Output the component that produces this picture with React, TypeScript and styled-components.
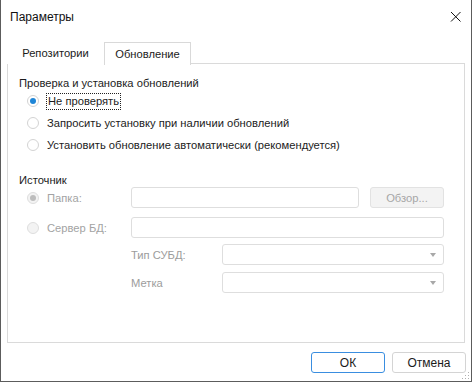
import React from "react";
import styled, { createGlobalStyle } from "styled-components";

const Global = createGlobalStyle`
  html, body { margin: 0; padding: 0; background: #fff; }
  * { box-sizing: border-box; }
  body { font-family: "Liberation Sans", Arial, sans-serif; font-size: 11.2px; color: #1b1b1b; }
`;

const Window = styled.div`
  position: relative;
  width: 472px;
  height: 382px;
  border: 1px solid #5c5c5c;
  border-top: none;
  background: #fff;
  display: flex;
  flex-direction: column;
`;

const TitleBar = styled.div`
  height: 33px;
  display: flex;
  align-items: center;
  justify-content: space-between;
  padding: 0 9px 0 9px;
  font-size: 12px;
  color: #111;
`;

const CloseBtn = styled.div`
  width: 12px;
  height: 12px;
  display: flex;
`;

const Tabs = styled.div`
  display: flex;
  margin: 9px 6px 0 6px;
  height: 22px;
  align-items: stretch;
  position: relative;
  z-index: 1;
`;

const Tab = styled.div<{ $active?: boolean }>`
  display: flex;
  align-items: center;
  justify-content: center;
  width: ${(p) => (p.$active ? "87px" : "97px")};
  border: 1px solid ${(p) => (p.$active ? "#d9d9d9" : "transparent")};
  border-bottom: none;
  background: #fff;
  height: ${(p) => (p.$active ? "23px" : "22px")};
  padding-bottom: 1px;
`;

const Panel = styled.div`
  margin: -1px 6px 0 6px;
  height: 280px;
  border: 1px solid #dadada;
  padding: 12px 11px 0 11px;
`;

const GroupTitle = styled.div`
  height: 14px;
  line-height: 14px;
`;

const RadioRow = styled.label<{ $disabled?: boolean }>`
  display: flex;
  align-items: center;
  height: 22px;
  padding-left: 8px;
  gap: 8px;
  color: ${(p) => (p.$disabled ? "#a3a3a3" : "#1b1b1b")};
`;

const Circle = styled.span<{ $checked?: boolean; $disabled?: boolean }>`
  width: 12px;
  height: 12px;
  border-radius: 50%;
  border: 1px solid ${(p) => (p.$disabled ? "#dedede" : "#d3d3d3")};
  background: ${(p) => (p.$disabled ? "#f3f3f3" : "#fff")};
  display: flex;
  align-items: center;
  justify-content: center;
  flex: none;
  &::after {
    content: "";
    width: 6px;
    height: 6px;
    border-radius: 50%;
    background: ${(p) => (p.$disabled ? "#bdbdbd" : "#1f86d7")};
    display: ${(p) => (p.$checked ? "block" : "none")};
  }
`;

const Focus = styled.span`
  outline: 1px dotted #222;
  padding: 0 1px;
  line-height: 15px;
`;

const Radios = styled.div`
  display: flex;
  flex-direction: column;
  margin-top: 0;
`;

const SourceTitle = styled.div`
  margin-top: 17px;
  height: 14px;
  line-height: 14px;
`;

const FormRow = styled.div<{ $mt: number }>`
  display: flex;
  align-items: center;
  margin-top: ${(p) => p.$mt}px;
  height: 21px;
`;

const LeadCell = styled.div`
  width: 112px;
  flex: none;
  display: flex;
  align-items: center;
  gap: 8px;
  padding-left: 8px;
  color: #a3a3a3;
`;

const SubLabel = styled.div`
  width: 91px;
  flex: none;
  color: #9c9c9c;
  margin-left: 112px;
`;

const Input = styled.div<{ $w: number }>`
  width: ${(p) => p.$w}px;
  height: 21px;
  border: 1px solid #dedede;
  border-radius: 3px;
  background: #fff;
`;

const Combo = styled(Input)`
  display: flex;
  align-items: center;
  justify-content: flex-end;
  padding-right: 7px;
`;

const Arrow = styled.span`
  width: 0;
  height: 0;
  border-left: 3.5px solid transparent;
  border-right: 3.5px solid transparent;
  border-top: 4px solid #a8a8a8;
`;

const BrowseBtn = styled.div`
  margin-left: 11px;
  width: 74px;
  height: 21px;
  border: 1px solid #e2e2e2;
  border-radius: 3px;
  background: #f3f3f3;
  color: #a6a6a6;
  display: flex;
  align-items: center;
  justify-content: center;
`;

const Footer = styled.div`
  display: flex;
  justify-content: flex-end;
  gap: 7px;
  padding: 9px 5px 0 0;
`;

const Button = styled.div<{ $primary?: boolean }>`
  width: 74px;
  height: 21px;
  border: 1px solid ${(p) => (p.$primary ? "#3a8ee0" : "#d4d4d4")};
  border-radius: 3px;
  background: #fff;
  display: flex;
  align-items: center;
  justify-content: center;
  color: #1b1b1b;
  font-size: 12px;
`;

const Grip = styled.svg`
  position: absolute;
  right: 1px;
  bottom: 1px;
`;

export default function App() {
  return (
    <>
      <Global />
      <Window>
        <TitleBar>
          <span>Параметры</span>
          <CloseBtn>
            <svg width="12" height="12" viewBox="0 0 12 12">
              <path d="M1 1 L10.5 10.5 M10.5 1 L1 10.5" stroke="#111" strokeWidth="1" fill="none" />
            </svg>
          </CloseBtn>
        </TitleBar>
        <Tabs>
          <Tab>Репозитории</Tab>
          <Tab $active>Обновление</Tab>
        </Tabs>
        <Panel>
          <GroupTitle>Проверка и установка обновлений</GroupTitle>
          <Radios>
            <RadioRow>
              <Circle $checked />
              <Focus>Не проверять</Focus>
            </RadioRow>
            <RadioRow>
              <Circle />
              Запросить установку при наличии обновлений
            </RadioRow>
            <RadioRow>
              <Circle />
              Установить обновление автоматически (рекомендуется)
            </RadioRow>
          </Radios>
          <SourceTitle>Источник</SourceTitle>
          <FormRow $mt={0}>
            <LeadCell>
              <Circle $checked $disabled />
              Папка:
            </LeadCell>
            <Input $w={228} />
            <BrowseBtn>Обзор...</BrowseBtn>
          </FormRow>
          <FormRow $mt={9}>
            <LeadCell>
              <Circle $disabled />
              Сервер БД:
            </LeadCell>
            <Input $w={313} />
          </FormRow>
          <FormRow $mt={6}>
            <SubLabel>Тип СУБД:</SubLabel>
            <Combo $w={222}>
              <Arrow />
            </Combo>
          </FormRow>
          <FormRow $mt={7}>
            <SubLabel>Метка</SubLabel>
            <Combo $w={222}>
              <Arrow />
            </Combo>
          </FormRow>
        </Panel>
        <Footer>
          <Button $primary>ОК</Button>
          <Button>Отмена</Button>
        </Footer>
        <Grip width="9" height="9" viewBox="0 0 9 9">
          {[[7, 1], [7, 4], [4, 4], [7, 7], [4, 7], [1, 7]].map(([x, y], i) => (
            <rect key={i} x={x} y={y} width="1" height="1" fill="#b0b0b0" />
          ))}
        </Grip>
      </Window>
    </>
  );
}
